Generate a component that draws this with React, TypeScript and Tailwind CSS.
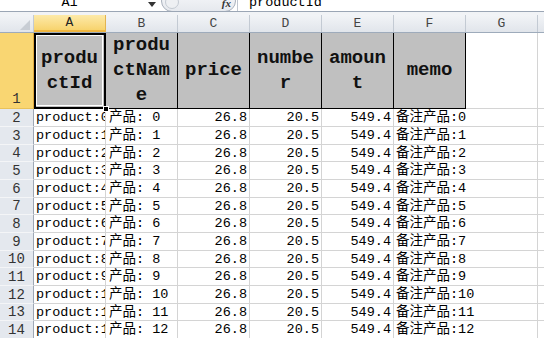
import React from "react";

const MONO = { fontFamily: '"Liberation Mono", "Noto Sans CJK SC", monospace' };

const heights = [18, 18, 17, 18, 18, 17, 18, 18, 17, 18, 18, 17, 18];

function HeaderCell({ label, active }: { label: string; active?: boolean }) {
  return (
    <div
      className={
        "w-[72px] h-full shrink-0 flex items-center justify-center border-r text-[13px] leading-none " +
        (active
          ? "bg-gradient-to-b from-[#fdeaa8] to-[#f7d36d] border-r-[#e2b450] border-b-2 border-b-[#f0b63f] text-[#222]"
          : "bg-gradient-to-b from-[#f2f4f7] to-[#e1e5eb] border-r-[#c3cad3] text-[#444]")
      }
    >
      {label}
    </div>
  );
}

export default function App() {
  const cols = ["A", "B", "C", "D", "E", "F", "G"];
  const titles = ["productId", "productName", "price", "number", "amount", "memo"];
  return (
    <div className="w-[544px] h-[338px] overflow-hidden bg-white relative" style={MONO}>
      {/* formula bar */}
      <div className="h-[12px] flex items-end border-b border-[#9ba6b5] bg-white overflow-hidden">
        <div className="w-[139px] text-center text-[13.5px] leading-none pb-[2px] text-black">A1</div>
        <div className="w-[22px] h-full flex items-center justify-center">
          <svg width="8" height="5" viewBox="0 0 8 5" className="ml-[3px] mb-[2px]">
            <path d="M0 0 L8 0 L4 5 Z" fill="#333" />
          </svg>
        </div>
        <div className="w-[75px] h-[22px] -mb-[1px] rounded-[11px] border border-[#a8b0bb] bg-gradient-to-b from-[#f7f8fa] to-[#e6e9ee] flex items-end justify-end pr-[4px] pb-[2px] relative">
          <div className="absolute left-[3px] bottom-[2px] w-[14px] h-[14px] rounded-full border border-[#c4cad2] bg-[#eef0f3]" />
          <span className="text-[11px] leading-none italic font-bold text-[#333]" style={{ fontFamily: '"Liberation Serif", serif' }}>
            fx
          </span>
        </div>
        <div className="w-px h-full bg-[#c0c6cf] ml-[1px]" />
        <div className="pl-[11px] text-[13.5px] leading-none pb-[2px] text-black">productId</div>
      </div>
      <div className="h-[3px] bg-[#f1f3f6]" />
      {/* column headers */}
      <div className="h-[18px] flex border-b border-[#9eabbb]">
        <div className="w-[34px] h-full shrink-0 bg-gradient-to-b from-[#f2f4f7] to-[#e1e5eb] border-r border-[#c3cad3] relative">
          <svg width="10" height="10" className="absolute right-[3px] bottom-[2px]" viewBox="0 0 10 10">
            <path d="M10 0 L10 10 L0 10 Z" fill="#c8cdd4" />
          </svg>
        </div>
        {cols.map((c, i) => (
          <HeaderCell key={c} label={c} active={i === 0} />
        ))}
        <div className="flex-1 bg-gradient-to-b from-[#f2f4f7] to-[#e1e5eb]" />
      </div>
      {/* row 1 */}
      <div className="h-[76px] flex">
        <div className="w-[34px] shrink-0 bg-[#f9d672] border-r border-[#e2a93d] border-b border-b-[#e9c25a] flex items-end justify-center text-[14px] leading-none pb-[2px] text-[#333]">
          1
        </div>
        {titles.map((t, i) => (
          <div
            key={t}
            className={
              "w-[72px] shrink-0 bg-[#c0c0c0] border-r border-b border-black flex items-center justify-center text-center px-[4px] text-[19px] leading-[25px] font-bold text-[#111] break-all relative " +
              (i === 0 ? "outline outline-2 -outline-offset-2 outline-black" : "")
            }
          >
            {i === 0 && <div className="absolute inset-[2px] border border-white pointer-events-none" />}
            <span className="block w-full">{t}</span>
          </div>
        ))}
        <div className="w-[72px] shrink-0 border-r border-b border-[#d4d4d4]" />
        <div className="flex-1 border-b border-[#d4d4d4]" />
      </div>
      {/* fill handle */}
      <div className="absolute left-[103px] top-[106px] w-[6px] h-[6px] bg-black border border-white" />
      {/* data rows */}
      {heights.map((h, r) => (
        <div key={r} className="flex text-[13.5px] leading-none text-black" style={{ height: h }}>
          <div className="w-[34px] shrink-0 bg-[#e4e8ee] border-r border-[#9ea8b5] border-b border-b-[#f4f5f7] flex items-center justify-center text-[14px] text-[#333]">
            {r + 2}
          </div>
          <div className="w-[72px] shrink-0 border-r border-b border-[#d4d4d4] flex items-center pl-[2px] pt-[1px] overflow-hidden whitespace-nowrap">
            product:{r}
          </div>
          <div className="w-[72px] shrink-0 border-r border-b border-[#d4d4d4] flex items-center pl-[3px] pt-[1px] overflow-hidden whitespace-nowrap">
            产品: {r}
          </div>
          <div className="w-[72px] shrink-0 border-r border-b border-[#d4d4d4] flex items-center justify-end pr-[2px] pt-[1px]">
            26.8
          </div>
          <div className="w-[72px] shrink-0 border-r border-b border-[#d4d4d4] flex items-center justify-end pr-[2px] pt-[1px]">
            20.5
          </div>
          <div className="w-[72px] shrink-0 border-r border-b border-[#d4d4d4] flex items-center justify-end pr-[2px] pt-[1px]">
            549.4
          </div>
          <div className="w-[72px] shrink-0 border-b border-[#d4d4d4] flex items-center pl-[2px] pt-[1px] whitespace-nowrap relative z-10">
            备注产品:{r}
          </div>
          <div className="w-[72px] shrink-0 border-r border-b border-[#d4d4d4]" />
          <div className="flex-1 border-b border-[#d4d4d4]" />
        </div>
      ))}
    </div>
  );
}
